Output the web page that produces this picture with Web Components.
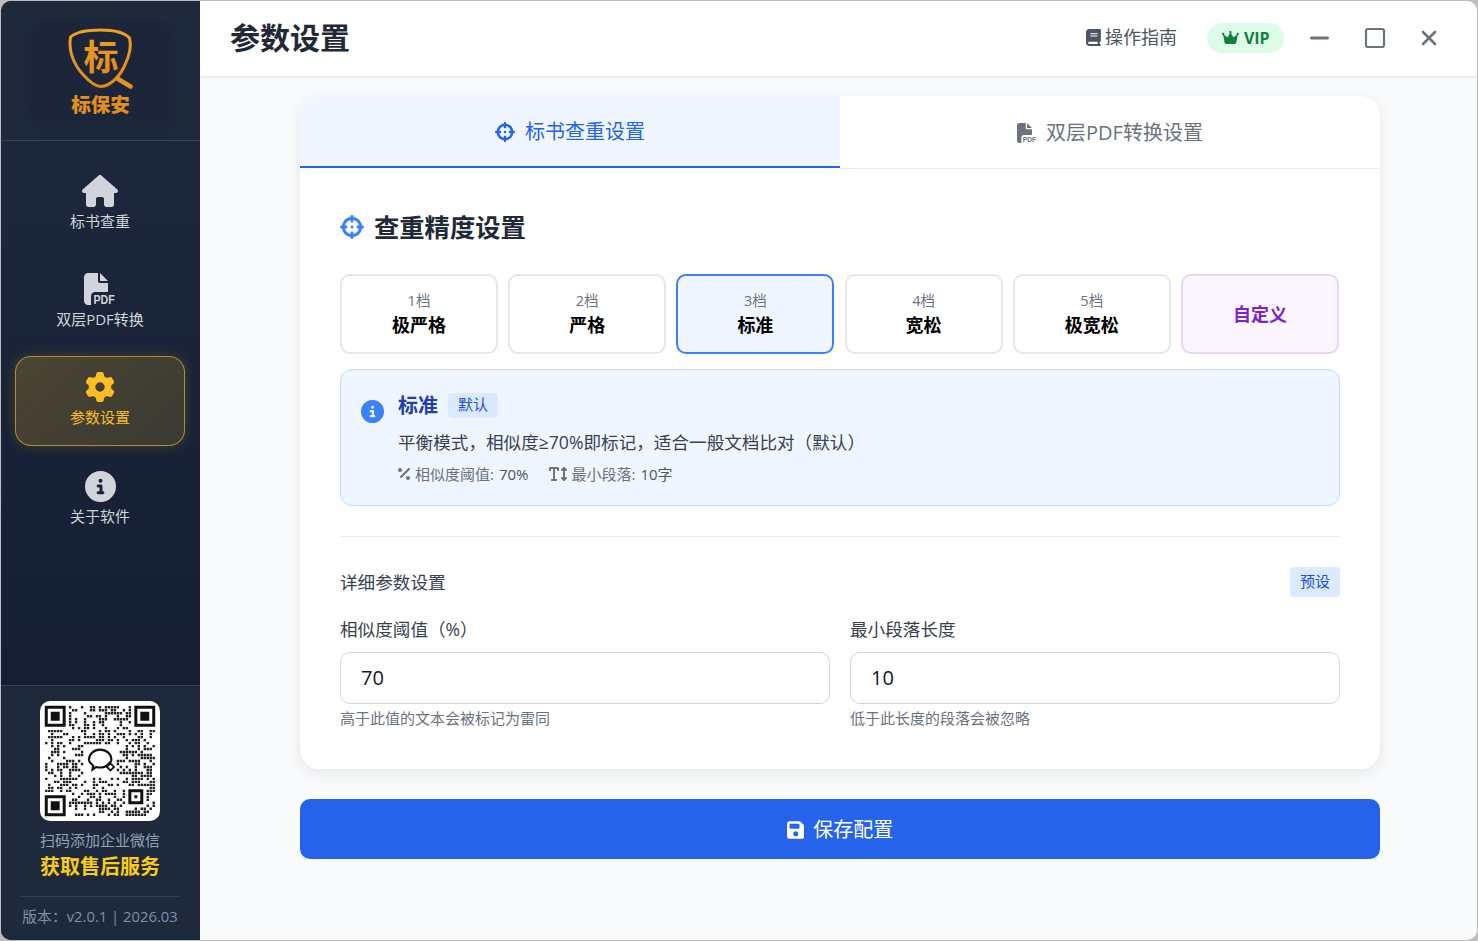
<!DOCTYPE html>
<html lang="zh-CN">
<head>
<meta charset="UTF-8">
<title>参数设置</title>
<style>
  html, body { margin: 0; height: 100%; }
  body { background: #bdbdbd; padding: 1px; box-sizing: border-box; height: 941px; overflow: hidden;
    font-family: "Open Sans", "Noto Sans CJK SC", sans-serif; }
  nav-item:last-child { margin-top: 1px; }
</style>
</head>
<body>
<script>
const ICONS = {
  house: [576, 'M575.8 255.5c0 18-15 32.1-32 32.1h-32l.7 160.2c0 2.7-.2 5.4-.5 8.1V472c0 22.1-17.9 40-40 40H456c-1.1 0-2.2 0-3.3-.1c-1.4 .1-2.8 .1-4.2 .1H416 392c-22.1 0-40-17.9-40-40V448 384c0-17.7-14.3-32-32-32H256c-17.7 0-32 14.3-32 32v64 24c0 22.1-17.9 40-40 40H160 128.1c-1.5 0-3-.1-4.5-.2c-1.2 .1-2.4 .2-3.6 .2H104c-22.1 0-40-17.9-40-40V360c0-.9 0-1.9 .1-2.8V287.6H32c-18 0-32-14-32-32.1c0-9 3-17 10-24L266.4 8c7-7 15-8 22-8s15 2 21 7L564.8 231.5c8 7 12 15 11 24z'],
  gear: [512, 'M495.9 166.6c3.2 8.7 .5 18.4-6.4 24.6l-43.3 39.4c1.1 8.3 1.7 16.8 1.7 25.4s-.6 17.1-1.7 25.4l43.3 39.4c6.9 6.2 9.6 15.9 6.4 24.6c-4.4 11.9-9.7 23.3-15.8 34.3l-4.7 8.1c-6.6 11-14 21.4-22.1 31.2c-5.9 7.2-15.7 9.6-24.5 6.8l-55.7-17.7c-13.4 10.3-28.2 18.9-44 25.4l-12.5 57.1c-2 9.1-9 16.3-18.2 17.8c-13.8 2.3-28 3.5-42.5 3.5s-28.7-1.2-42.5-3.5c-9.2-1.5-16.2-8.7-18.2-17.8l-12.5-57.1c-15.8-6.5-30.6-15.1-44-25.4L83.1 425.9c-8.8 2.8-18.6 .3-24.5-6.8c-8.1-9.8-15.5-20.2-22.1-31.2l-4.7-8.1c-6.1-11-11.4-22.4-15.8-34.3c-3.2-8.7-.5-18.4 6.4-24.6l43.3-39.4C64.6 273.1 64 264.6 64 256s.6-17.1 1.7-25.4L22.4 191.2c-6.9-6.2-9.6-15.9-6.4-24.6c4.4-11.9 9.7-23.3 15.8-34.3l4.7-8.1c6.6-11 14-21.4 22.1-31.2c5.9-7.2 15.7-9.6 24.5-6.8l55.7 17.7c13.4-10.3 28.2-18.9 44-25.4l12.5-57.1c2-9.1 9-16.3 18.2-17.8C227.3 1.2 241.5 0 256 0s28.7 1.2 42.5 3.5c9.2 1.5 16.2 8.7 18.2 17.8l12.5 57.1c15.8 6.5 30.6 15.1 44 25.4l55.7-17.7c8.8-2.8 18.6-.3 24.5 6.8c8.1 9.8 15.5 20.2 22.1 31.2l4.7 8.1c6.1 11 11.4 22.4 15.8 34.3zM256 336a80 80 0 1 0 0-160 80 80 0 1 0 0 160z'],
  info: [512, 'M256 512A256 256 0 1 0 256 0a256 256 0 1 0 0 512zM216 336h24V272H216c-13.3 0-24-10.7-24-24s10.7-24 24-24h48c13.3 0 24 10.7 24 24v88h8c13.3 0 24 10.7 24 24s-10.7 24-24 24H216c-13.3 0-24-10.7-24-24s10.7-24 24-24zm40-208a32 32 0 1 1 0 64 32 32 0 1 1 0-64z'],
  crosshairs: [512, 'M256 0c17.7 0 32 14.3 32 32V42.4c93.7 13.9 167.7 88 181.6 181.6H480c17.7 0 32 14.3 32 32s-14.3 32-32 32H469.6c-13.9 93.7-88 167.7-181.6 181.6V480c0 17.7-14.3 32-32 32s-32-14.3-32-32V469.6C130.3 455.7 56.3 381.7 42.4 288H32c-17.7 0-32-14.3-32-32s14.3-32 32-32H42.4C56.3 130.3 130.3 56.3 224 42.4V32c0-17.7 14.3-32 32-32zM107.4 288c12.5 58.3 58.4 104.1 116.6 116.6V384c0-17.7 14.3-32 32-32s32 14.3 32 32v20.6c58.3-12.5 104.1-58.4 116.6-116.6H384c-17.7 0-32-14.3-32-32s14.3-32 32-32h20.6C392.1 165.7 346.3 119.9 288 107.4V128c0 17.7-14.3 32-32 32s-32-14.3-32-32V107.4C165.7 119.9 119.9 165.7 107.4 224H128c17.7 0 32 14.3 32 32s-14.3 32-32 32H107.4zM256 224a32 32 0 1 1 0 64 32 32 0 1 1 0-64z'],
  book: [448, 'M96 0C43 0 0 43 0 96V416c0 53 43 96 96 96H384h32c17.7 0 32-14.3 32-32s-14.3-32-32-32V384c17.7 0 32-14.3 32-32V32c0-17.7-14.3-32-32-32H384 96zm0 384H352v64H96c-17.7 0-32-14.3-32-32s14.3-32 32-32zm32-240c0-8.8 7.2-16 16-16H336c8.8 0 16 7.2 16 16s-7.2 16-16 16H144c-8.8 0-16-7.2-16-16zm16 48H336c8.8 0 16 7.2 16 16s-7.2 16-16 16H144c-8.8 0-16-7.2-16-16s7.2-16 16-16z'],
  crown: [576, 'M309 106c11.4-7 19-19.7 19-34c0-22.1-17.9-40-40-40s-40 17.9-40 40c0 14.4 7.6 27 19 34L209.7 220.6c-9.1 18.2-32.7 23.4-48.6 10.7L72 160c5-6.7 8-15 8-24c0-22.1-17.9-40-40-40S0 113.9 0 136s17.9 40 40 40c.2 0 .5 0 .7 0L86.4 427.4c5.5 30.4 32 52.6 63 52.6H426.6c30.9 0 57.4-22.1 63-52.6L535.3 176c.2 0 .5 0 .7 0c22.1 0 40-17.9 40-40s-17.9-40-40-40s-40 17.9-40 40c0 9 3 17.3 8 24l-89.1 71.3c-15.9 12.7-39.5 7.5-48.6-10.7L309 106z'],
  floppy: [448, 'M64 32C28.7 32 0 60.7 0 96V416c0 35.3 28.7 64 64 64H384c35.3 0 64-28.7 64-64V173.3c0-17-6.7-33.3-18.7-45.3L352 50.7C340 38.7 323.7 32 306.7 32H64zm0 96c0-17.7 14.3-32 32-32H288c17.7 0 32 14.3 32 32v64c0 17.7-14.3 32-32 32H96c-17.7 0-32-14.3-32-32V128zM224 288a64 64 0 1 1 0 128 64 64 0 1 1 0-128z'],
  percent: [384, 'M374.6 118.6c12.5-12.5 12.5-32.8 0-45.3s-32.8-12.5-45.3 0l-256 256c-12.5 12.5-12.5 32.8 0 45.3s32.8 12.5 45.3 0l256-256zM128 128A64 64 0 1 0 0 128a64 64 0 1 0 128 0zM384 384a64 64 0 1 0 -128 0 64 64 0 1 0 128 0z'],
  textheight: [576, 'M64 128V96h64l0 320H96c-17.7 0-32 14.3-32 32s14.3 32 32 32H224c17.7 0 32-14.3 32-32s-14.3-32-32-32H192l0-320h64v32c0 17.7 14.3 32 32 32s32-14.3 32-32V80c0-26.5-21.5-48-48-48H160 48C21.5 32 0 53.5 0 80v48c0 17.7 14.3 32 32 32s32-14.3 32-32zM502.6 41.4c-12.5-12.5-32.8-12.5-45.3 0l-64 64c-12.5 12.5-12.5 32.8 0 45.3s32.8 12.5 45.3 0l9.4-9.4V370.7l-9.4-9.4c-12.5-12.5-32.8-12.5-45.3 0s-12.5 32.8 0 45.3l64 64c12.5 12.5 32.8 12.5 45.3 0l64-64c12.5-12.5 12.5-32.8 0-45.3s-32.8-12.5-45.3 0l-9.4 9.4V141.3l9.4 9.4c12.5 12.5 32.8 12.5 45.3 0s12.5-32.8 0-45.3l-64-64z']
};
// file body only, the label is set as real text on top
const FILE_BODY = 'M0 64C0 28.7 28.7 0 64 0H224V128c0 17.7 14.3 32 32 32H384V304H176c-35.3 0-64 28.7-64 64V512H64c-35.3 0-64-28.7-64-64V64zm384 64H256V0L384 128z';

class FaIcon extends HTMLElement {
  connectedCallback() {
    const size = +this.getAttribute('size') || 16;
    const root = this.attachShadow({ mode: 'open' });
    const name = this.getAttribute('name');
    if (name === 'pdf') {
      root.innerHTML = `<style>:host{display:inline-flex;flex:none}svg{display:block;overflow:visible}</style>
        <svg width="${size}" height="${size}" viewBox="0 0 512 512"><path fill="currentColor" d="${FILE_BODY}"/>
        <text x="150" y="490" font-family="Liberation Sans, sans-serif" font-weight="700" font-size="200" textLength="340" lengthAdjust="spacingAndGlyphs" fill="currentColor">PDF</text></svg>`;
      return;
    }
    const [w, d] = ICONS[name];
    root.innerHTML = `<style>:host{display:inline-flex;flex:none}svg{display:block}</style>
      <svg width="${size * w / 512}" height="${size}" viewBox="0 0 ${w} 512"><path fill="currentColor" fill-rule="evenodd" d="${d}"/></svg>`;
  }
}
customElements.define('fa-icon', FaIcon);

class LogoMark extends HTMLElement {
  constructor() {
    super();
    this.attachShadow({ mode: 'open' }).innerHTML = `<style>
      :host{display:block;width:140px;height:100px;border-radius:16px;background:#1c2539;box-shadow:0 6px 12px rgba(15,23,42,.16)}
      svg{display:block}
    </style>
    <svg width="140" height="100" viewBox="30 20 140 100">
      <defs><linearGradient id="g" x1="0" y1="0" x2="0" y2="1"><stop offset="0" stop-color="#eda021"/><stop offset="1" stop-color="#e08a1c"/></linearGradient></defs>
      <path d="M99.500 29C87 29 75 31 69.500 36C67.500 48 71.500 62 81.500 73C89.500 82 95.500 85.500 99.500 85.500C107.500 85.500 117 78 123 66C128.500 55 130.500 44 128.500 37C123 31 111.500 29 99.500 29Z" fill="none" stroke="url(#g)" stroke-width="3"/>
      <path d="M117 78L129.500 85.500" stroke="#e8931f" stroke-width="4.500" stroke-linecap="round"/>
      <text x="100" y="69" text-anchor="middle" font-family="Noto Sans CJK SC, sans-serif" font-weight="700" font-size="35" fill="url(#g)">标</text>
      <text x="99.500" y="111" text-anchor="middle" font-family="Noto Sans CJK SC, sans-serif" font-weight="900" font-size="19.500" fill="#e0901e">标保安</text>
    </svg>`;
  }
}
customElements.define('logo-mark', LogoMark);

class NavItem extends HTMLElement {
  constructor() {
    super();
    this.attachShadow({ mode: 'open' }).innerHTML = `<style>
      :host{display:flex;flex-direction:column;align-items:center;box-sizing:border-box;height:90px;padding-top:14px;border:1px solid transparent;border-radius:16px;color:#d1d5db;font-size:15px;line-height:20px}
      :host([active]){color:#fbbf24;background:linear-gradient(135deg,rgba(251,191,36,.22),rgba(251,191,36,.15));border-color:rgba(251,191,36,.62);box-shadow:0 0 12px rgba(251,191,36,.2)}
      .icon{height:32px;display:flex;align-items:center;justify-content:center;margin-bottom:4px}
    </style><div class="icon"><slot name="icon"></slot></div><slot></slot>`;
  }
}
customElements.define('nav-item', NavItem);

class QrCode extends HTMLElement {
  constructor() {
    super();
    // not a scannable code, just modules laid out like the reference
    const n = 37, dark = [];
    let seed = 20260302;
    const rnd = () => {
      seed ^= seed << 13; seed ^= seed >>> 17; seed ^= seed << 5; seed >>>= 0;
      return seed / 4294967296;
    };
    const inFinder = (x, y) => (x < 8 && y < 8) || (x > n - 9 && y < 8) || (x < 8 && y > n - 9);
    for (let y = 0; y < n; y++) for (let x = 0; x < n; x++) {
      if (inFinder(x, y)) continue;
      if (x >= 27 && x <= 33 && y >= 27 && y <= 33) continue;
      if (x >= 13 && x <= 23 && y >= 13 && y <= 23) continue;
      if (rnd() < .46) dark.push(`M${x + .1} ${y + .1}h.8v.8h-.8z`);
    }
    const finder = (x, y) => `M${x} ${y}h7v7h-7zM${x + 1} ${y + 1}v5h5v-5zM${x + 2} ${y + 2}h3v3h-3z`;
    const align = 'M28 28h5v5h-5zM29 29v3h3v-3zM30 30h1v1h-1z';
    this.attachShadow({ mode: 'open' }).innerHTML = `<style>
      :host{display:block;width:120px;height:120px;border-radius:10px;background:#fff}
      svg{display:block}
    </style>
    <svg width="120" height="120" viewBox="-1.600 -1.600 40.200 40.200">
      <path d="${dark.join('')}" fill="#222"/>
      <path d="${finder(0, 0)}${finder(30, 0)}${finder(0, 30)}${align}" fill="#111" fill-rule="evenodd"/>
      <path d="M14.800 18.100c0-2 1.700-3.400 3.700-3.400 2.100 0 3.800 1.400 3.800 3.200 0 .3 0 .5-.1.700l-.9.900c-.7.800-1.700 1.200-2.800 1.200-.5 0-.9-.1-1.300-.2l-1.200.9.200-1.400c-.8-.6-1.400-1.500-1.400-1.900z" fill="none" stroke="#111" stroke-width=".7"/>
      <path d="M22 19.300l1.200 1.200-1.200 1.200-1.200-1.200z" fill="none" stroke="#111" stroke-width=".6"/>
    </svg>`;
  }
}
customElements.define('qr-code', QrCode);

class SideBar extends HTMLElement {
  constructor() {
    super();
    this.attachShadow({ mode: 'open' }).innerHTML = `<style>
      :host{display:flex;flex-direction:column;width:199px;flex:none;color:#d1d5db;background:linear-gradient(180deg,#1f2a3e 0,#111a2e 100%)}
      .brand{height:140px;box-sizing:border-box;padding-top:20px;display:flex;justify-content:center;border-bottom:1px solid #374258;background:#1e293b}
      nav{flex:1;display:flex;flex-direction:column;gap:8px;padding:19px 15px 0 14px}
      footer{background:#1e293b;border-top:1px solid #334155;padding:15px 20px 0 19px;height:255px;box-sizing:border-box;display:flex;flex-direction:column;align-items:center}
      .scan{margin-top:9px;font-size:15px;line-height:20px;color:#94a3b8;white-space:nowrap}
      .cta{margin-top:3px;font-size:20px;line-height:28px;font-weight:700;color:#facc15;white-space:nowrap}
      .ver{align-self:stretch;margin-top:15px;border-top:1px solid #334155;padding-top:9px;text-align:center;font-size:14.800px;line-height:20px;color:#7c90ab;white-space:nowrap}
    </style>
    <div class="brand"><logo-mark></logo-mark></div>
    <nav><slot></slot></nav>
    <footer><qr-code></qr-code>
      <div class="scan">扫码添加企业微信</div>
      <div class="cta">获取售后服务</div>
      <div class="ver">版本：v2.0.1 | 2026.03</div>
    </footer>`;
  }
}
customElements.define('side-bar', SideBar);

class TopBar extends HTMLElement {
  constructor() {
    super();
    this.attachShadow({ mode: 'open' }).innerHTML = `<style>
      :host{display:flex;align-items:center;height:75px;flex:none;box-sizing:border-box;padding:0 36px 2px 30px;background:#fff;box-shadow:0 1px 3px rgba(0,0,0,.1);position:relative;z-index:1}
      h1{margin:0;font-size:30px;line-height:40px;font-weight:700;color:#1f2937;flex:1}
      .guide{display:flex;align-items:center;gap:4px;font-size:18px;color:#4b5563;line-height:24px;padding-bottom:1px}
      .vip{display:flex;align-items:center;gap:5px;margin-left:30px;width:77px;height:30px;box-sizing:border-box;padding-left:15px;border-radius:15px;background:#dcfce7;color:#15803d;font-size:16px;font-weight:700;line-height:30px}
      .win{display:flex;align-items:center;justify-content:center;width:24px;height:24px;color:#6b7280}
      .min{margin-left:24px}
      .max{margin-left:31px}
      .close{margin-left:30px}
    </style>
    <h1><slot></slot></h1>
    <div class="guide"><fa-icon name="book" size="17"></fa-icon>操作指南</div>
    <div class="vip"><fa-icon name="crown" size="15"></fa-icon>VIP</div>
    <div class="win min"><svg width="20" height="4"><rect width="19" height="3" y=".5" rx="1.500" fill="currentColor"/></svg></div>
    <div class="win max"><svg width="22" height="22"><rect x="2" y="2" width="18" height="18" rx="2" fill="none" stroke="currentColor" stroke-width="2.200"/></svg></div>
    <div class="win close"><svg width="16" height="16" viewBox="0 0 16 16"><path d="M2 2L14 14M14 2L2 14" stroke="currentColor" stroke-width="2.600" stroke-linecap="round"/></svg></div>`;
  }
}
customElements.define('top-bar', TopBar);

class TabButton extends HTMLElement {
  constructor() {
    super();
    this.attachShadow({ mode: 'open' }).innerHTML = `<style>
      :host{flex:1;display:flex;align-items:center;justify-content:center;gap:9px;box-sizing:border-box;height:73px;padding-top:1px;font-size:20px;line-height:28px;color:#6b7280;border-bottom:1px solid #e5e7eb}
      :host([active]){color:#2563eb;background:#eff6ff;height:72px;margin-bottom:1px;border-bottom:2px solid #2563eb;gap:10px}
    </style><slot></slot>`;
  }
}
customElements.define('tab-button', TabButton);

class LevelOption extends HTMLElement {
  connectedCallback() {
    this.attachShadow({ mode: 'open' }).innerHTML = `<style>
      :host{display:flex;flex-direction:column;align-items:center;justify-content:center;box-sizing:border-box;height:80px;border:2px solid #e5e7eb;border-radius:10px;background:#fff;color:#000}
      :host([active]){border-color:#3b82f6;background:#eff6ff}
      :host([custom]){border-color:#e9d5ff;background:#faf5ff;color:#7e22ce}
      .n{font-size:14.500px;line-height:20px;color:#6b7280;margin-bottom:1px}
      .n:empty{display:none}
      .t{font-size:18px;line-height:26px;font-weight:700}
    </style><div class="n">${this.getAttribute('level') || ''}</div><div class="t"><slot></slot></div>`;
  }
}
customElements.define('level-option', LevelOption);

class InfoPanel extends HTMLElement {
  constructor() {
    super();
    this.attachShadow({ mode: 'open' }).innerHTML = `<style>
      :host{display:flex;gap:14px;box-sizing:border-box;height:137px;padding:23px 20px 0 20px;border:1px solid #bfdbfe;border-radius:12px;background:#eff6ff}
      .ic{color:#3b82f6;padding-top:7px}
      .head{display:flex;align-items:center;gap:10px;height:25px}
      .title{font-size:20px;font-weight:700;color:#1e40af;line-height:25px}
      .badge{font-size:15px;line-height:23px;height:25px;padding:0 10px;border-radius:4px;background:#dbeafe;color:#1d4ed8}
      .desc{margin-top:11px;font-size:17.600px;line-height:26px;color:#374151;white-space:nowrap}
      .meta{display:flex;gap:20px;margin-top:8px;font-size:15px;line-height:22px;color:#6b7280;white-space:nowrap}
      .meta span{display:flex;align-items:center;gap:5px}
      b{font-weight:400;color:#4b5563}
    </style>
    <div class="ic"><fa-icon name="info" size="23"></fa-icon></div>
    <div>
      <div class="head"><div class="title">标准</div><div class="badge">默认</div></div>
      <div class="desc">平衡模式，相似度≥70%即标记，适合一般文档比对（默认）</div>
      <div class="meta"><span><fa-icon name="percent" size="16"></fa-icon>相似度阈值: <b>70%</b></span><span><fa-icon name="textheight" size="16"></fa-icon>最小段落: <b>10字</b></span></div>
    </div>`;
  }
}
customElements.define('info-panel', InfoPanel);

class NumberField extends HTMLElement {
  connectedCallback() {
    this.attachShadow({ mode: 'open' }).innerHTML = `<style>
      :host{display:block;flex:1;min-width:0}
      label{display:block;font-size:17.600px;line-height:24px;color:#374151;margin-bottom:11px}
      .box{height:52px;box-sizing:border-box;border:1px solid #d1d5db;border-radius:10px;padding:0 20px;font-size:20px;line-height:50px;color:#111827;background:#fff}
      .hint{margin-top:4px;font-size:15px;line-height:20px;color:#6b7280;white-space:nowrap}
    </style>
    <label>${this.getAttribute('label')}</label>
    <div class="box">${this.getAttribute('value')}</div>
    <div class="hint">${this.getAttribute('hint')}</div>`;
  }
}
customElements.define('number-field', NumberField);

class SettingsCard extends HTMLElement {
  constructor() {
    super();
    this.attachShadow({ mode: 'open' }).innerHTML = `<style>
      :host{display:block;width:1080px;height:673px;border-radius:20px;background:#fff;box-shadow:0 4px 16px rgba(0,0,0,.08);overflow:hidden;flex:none}
      .tabs{display:flex;height:73px}
      .body{padding:40px 40px 0}
      h2{display:flex;align-items:center;gap:10px;margin:0;height:36px;font-size:25.300px;line-height:36px;font-weight:700;color:#1f2937}
      h2 fa-icon{color:#3b82f6}
      .levels{display:grid;grid-template-columns:repeat(6,158px);column-gap:10.200px;margin-top:29px}
      .panel{margin-top:15px}
      hr{border:0;border-top:1px solid #e5e7eb;margin:30px 0 0}
      .row{display:flex;align-items:center;justify-content:space-between;height:30px;margin-top:30px;font-size:17.600px;color:#374151}
      .row span:first-child{padding-bottom:2px}
      .preset{height:30px;width:50px;text-align:center;border-radius:4px;background:#dbeafe;color:#1d4ed8;font-size:15px;line-height:29px}
      .fields{display:flex;gap:20px;margin-top:20px}
    </style>
    <div class="tabs"><slot name="tabs"></slot></div>
    <div class="body">
      <h2><fa-icon name="crosshairs" size="24"></fa-icon>查重精度设置</h2>
      <div class="levels"><slot name="levels"></slot></div>
      <div class="panel"><info-panel></info-panel></div>
      <hr>
      <div class="row"><span>详细参数设置</span><span class="preset">预设</span></div>
      <div class="fields"><slot name="fields"></slot></div>
    </div>`;
  }
}
customElements.define('settings-card', SettingsCard);

class SaveButton extends HTMLElement {
  constructor() {
    super();
    this.attachShadow({ mode: 'open' }).innerHTML = `<style>
      :host{display:flex;align-items:center;justify-content:center;gap:9px;width:1080px;height:60px;flex:none;box-sizing:border-box;padding-top:1px;border-radius:10px;background:#2563eb;color:#fff;font-size:20px;line-height:28px}
    </style><fa-icon name="floppy" size="20"></fa-icon><slot></slot>`;
  }
}
customElements.define('save-button', SaveButton);

class AppWindow extends HTMLElement {
  constructor() {
    super();
    this.attachShadow({ mode: 'open' }).innerHTML = `<style>
      :host{display:flex;height:939px;width:1476px;border-radius:10px;overflow:hidden;background:#f9fafb}
      .right{flex:1;display:flex;flex-direction:column;min-width:0}
      main{flex:1;display:flex;flex-direction:column;align-items:center;gap:30px;padding:20px 0 0 3px}
    </style>
    <slot name="side"></slot>
    <div class="right"><slot name="top"></slot><main><slot></slot></main></div>`;
  }
}
customElements.define('app-window', AppWindow);
</script>

<app-window>
  <side-bar slot="side">
    <nav-item><fa-icon slot="icon" name="house" size="32"></fa-icon>标书查重</nav-item>
    <nav-item><fa-icon slot="icon" name="pdf" size="32"></fa-icon>双层PDF转换</nav-item>
    <nav-item active><fa-icon slot="icon" name="gear" size="30"></fa-icon>参数设置</nav-item>
    <nav-item><fa-icon slot="icon" name="info" size="31"></fa-icon>关于软件</nav-item>
  </side-bar>
  <top-bar slot="top">参数设置</top-bar>
  <settings-card>
    <tab-button slot="tabs" active><fa-icon name="crosshairs" size="20"></fa-icon>标书查重设置</tab-button>
    <tab-button slot="tabs"><fa-icon name="pdf" size="20"></fa-icon>双层PDF转换设置</tab-button>
    <level-option slot="levels" level="1档">极严格</level-option>
    <level-option slot="levels" level="2档">严格</level-option>
    <level-option slot="levels" level="3档" active>标准</level-option>
    <level-option slot="levels" level="4档">宽松</level-option>
    <level-option slot="levels" level="5档">极宽松</level-option>
    <level-option slot="levels" custom>自定义</level-option>
    <number-field slot="fields" label="相似度阈值（%）" value="70" hint="高于此值的文本会被标记为雷同"></number-field>
    <number-field slot="fields" label="最小段落长度" value="10" hint="低于此长度的段落会被忽略"></number-field>
  </settings-card>
  <save-button>保存配置</save-button>
</app-window>
</body>
</html>
